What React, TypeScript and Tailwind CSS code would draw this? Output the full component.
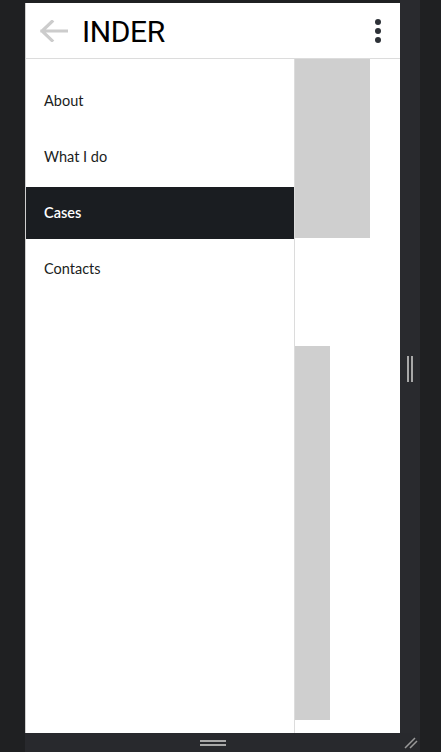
import { useState } from 'react';

const items = ['About', 'What I do', 'Cases', 'Contacts'];

function BackArrow() {
  return (
    <svg width="28" height="22" viewBox="0 0 28 22" fill="none">
      <path d="M2 11 H27 M12 1.5 L2 11 L12 20.5" stroke="#cccccc" strokeWidth="3.2" strokeLinecap="square" />
    </svg>
  );
}

export default function App() {
  const [active, setActive] = useState('Cases');

  return (
    <div className="w-[441px] h-[752px] flex bg-[#1f2022] overflow-hidden">
      <div className="w-[25px] shrink-0" />
      <div className="w-[395px] flex flex-col">
        <div className="flex h-[733px]">
          <div className="w-[375px] flex flex-col">
            <div className="h-[3px] shrink-0" />
            <div className="flex-1 bg-white flex flex-col border-l border-[#cfcfcf]">
              <header className="h-[56px] shrink-0 flex items-center border-b border-[#dcdcdc] pl-[14px] pr-[19px]">
                <BackArrow />
                <h1 className="ml-[14px] text-[30px] leading-none text-black font-['Roboto',sans-serif] tracking-[-0.4px] mt-[2px]">INDER</h1>
                <div className="ml-auto flex flex-col gap-[3px] mt-[1px]">
                  <span className="w-[6px] h-[6px] rounded-full bg-[#2d3137]" />
                  <span className="w-[6px] h-[6px] rounded-full bg-[#2d3137]" />
                  <span className="w-[6px] h-[6px] rounded-full bg-[#2d3137]" />
                </div>
              </header>
              <div className="flex flex-1 min-h-0">
                <nav className="w-[269px] shrink-0 border-r border-[#dcdcdc] pt-[16px] font-['Lato',sans-serif]">
                  {items.map((item) => (
                    <button
                      key={item}
                      onClick={() => setActive(item)}
                      className={
                        item === active
                          ? 'w-full h-[52px] mb-[4px] flex items-center pl-[18px] bg-[#1a1d21] text-white text-[14.5px] font-semibold'
                          : 'w-full h-[52px] mb-[4px] flex items-center pl-[18px] text-[#1a1d21] text-[14.5px]'
                      }
                    >
                      {item}
                    </button>
                  ))}
                </nav>
                <div className="flex-1 flex flex-col">
                  <div className="w-[75px] h-[179px] bg-[#cfcfcf]" />
                  <div className="w-[35px] h-[374px] mt-[108px] bg-[#cfcfcf]" />
                </div>
              </div>
            </div>
          </div>
          <div className="w-[20px] shrink-0 bg-[#292a2e] flex items-center justify-center">
            <div className="flex gap-[2px] mt-[4px]">
              <span className="w-[2px] h-[26px] bg-[#a8a8a8]" />
              <span className="w-[2px] h-[26px] bg-[#a8a8a8]" />
            </div>
          </div>
        </div>
        <div className="h-[19px] shrink-0 bg-[#28292d] flex items-center relative">
          <div className="ml-[175px] flex flex-col gap-[2px] mt-[1px]">
            <span className="w-[26px] h-[2px] bg-[#a8a8a8]" />
            <span className="w-[26px] h-[2px] bg-[#a8a8a8]" />
          </div>
          <svg className="absolute right-[2px] top-[4px]" width="14" height="12" viewBox="0 0 14 12">
            <path d="M1 11 L11 1 M6 11 L13 4" stroke="#9a9a9a" strokeWidth="1.5" />
          </svg>
        </div>
      </div>
      <div className="flex-1" />
    </div>
  );
}
